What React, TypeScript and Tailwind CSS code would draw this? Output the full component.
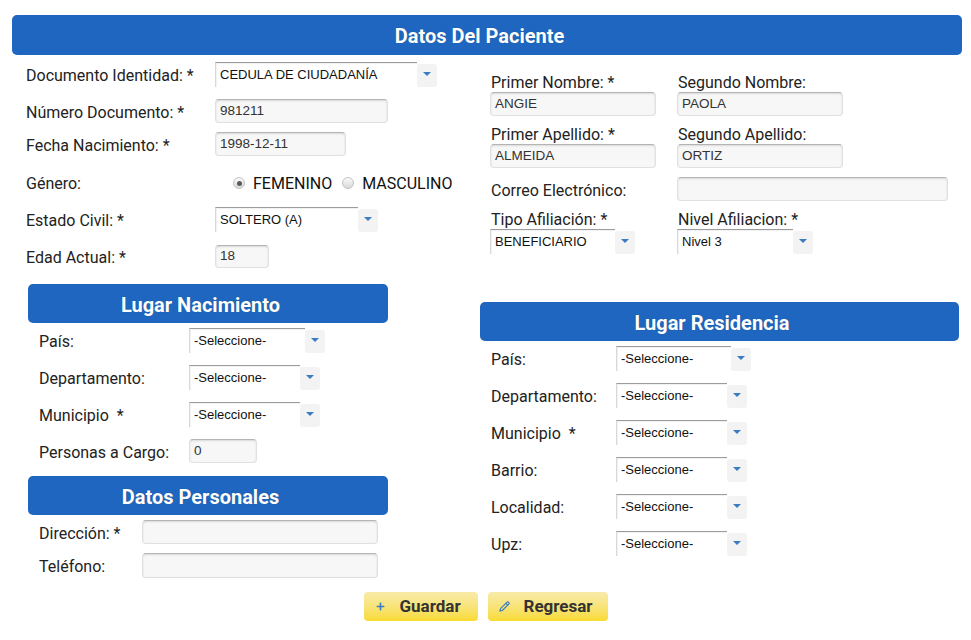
import { Pencil, Plus } from 'lucide-react';

const Header = ({ title, className = '' }: { title: string; className?: string }) => (
  <div
    className={`flex items-center justify-center rounded-[5px] bg-[#1e66bf] pt-[2px] pr-[15px] text-[20px] font-bold text-white [text-shadow:0_0_1px_rgba(0,0,0,0.3)] ${className}`}
  >
    {title}
  </div>
);

const Select = ({ value, width }: { value: string; width: string }) => (
  <div className="flex h-[25px]">
    <div
      className={`${width} h-full border-t border-l border-t-[#9c9c9c] border-l-[#d8d8d8] bg-white pl-[4px] pt-[4px] text-[13px] leading-[15px] text-[#111] shadow-[inset_1px_1px_1px_rgba(0,0,0,0.06)] font-['Liberation_Sans',Arial,sans-serif]`}
    >
      {value}
    </div>
    <div className="mt-[2px] flex h-[23px] w-[20px] items-start justify-center rounded-[3px] bg-[#f4f3f3] pt-[8px]">
      <div className="h-0 w-0 border-x-[4px] border-t-[4px] border-x-transparent border-t-[#3a7cc2]" />
    </div>
  </div>
);

const Input = ({ value = '', width, h = 'h-[24px]' }: { value?: string; width: string; h?: string }) => (
  <div
    className={`${width} ${h} flex items-center rounded-[4px] border border-[#e0e0e0] border-t-[#b4b4b4] bg-[#f7f7f7] pl-[4px] text-[13.5px] text-[#333] shadow-[inset_0_1px_2px_rgba(0,0,0,0.12)] font-['Liberation_Sans',Arial,sans-serif]`}
  >
    {value}
  </div>
);

const Radio = ({ checked }: { checked?: boolean }) => (
  <div className="flex h-[12px] w-[12px] items-center justify-center rounded-full border border-[#c2c2c2] bg-linear-to-b from-[#fbfbfb] to-[#d9d9d9]">
    {checked && <div className="h-[5px] w-[5px] rounded-full bg-[#5a5a5a]" />}
  </div>
);

const Row = ({
  label,
  labelW,
  className = '',
  children,
}: {
  label: string;
  labelW: string;
  className?: string;
  children: React.ReactNode;
}) => (
  <div className={`flex items-center ${className}`}>
    <div className={`${labelW} pt-[2px] leading-[19px]`}>{label}</div>
    {children}
  </div>
);

export default function App() {
  return (
    <div className="w-[971px] bg-white px-[12px] pt-[15px] pb-[19px] text-[16px] text-[#222] font-['Roboto',sans-serif]">
      <Header title="Datos Del Paciente" className="h-[40px] w-[950px]" />

      <div className="grid grid-cols-[468px_482px]">
        {/* left column */}
        <div>
          <div className="pl-[14px]">
            <Row label="Documento Identidad: *" labelW="w-[189px]" className="mt-[7px]">
              <Select value="CEDULA DE CIUDADANÍA" width="w-[202px]" />
            </Row>
            <Row label="Número Documento: *" labelW="w-[189px]" className="mt-[12px]">
              <Input value="981211" width="w-[173px]" />
            </Row>
            <Row label="Fecha Nacimiento: *" labelW="w-[189px]" className="mt-[9px]">
              <Input value="1998-12-11" width="w-[131px]" />
            </Row>
            <Row label="Género:" labelW="w-[189px]" className="mt-[14px] h-[24px]">
              <div className="ml-[18px] flex items-center pt-[2px] text-[16px] leading-[19px] text-[#111]">
                <Radio checked />
                <span className="ml-[8px]">FEMENINO</span>
                <div className="ml-[10px]">
                  <Radio />
                </div>
                <span className="ml-[8px]">MASCULINO</span>
              </div>
            </Row>
            <Row label="Estado Civil: *" labelW="w-[189px]" className="mt-[13px]">
              <Select value="SOLTERO (A)" width="w-[143px]" />
            </Row>
            <Row label="Edad Actual: *" labelW="w-[189px]" className="mt-[13px]">
              <Input value="18" width="w-[54px]" h="h-[23px]" />
            </Row>
          </div>

          <div className="ml-[16px] w-[360px]">
            <Header title="Lugar Nacimiento" className="mt-[16px] h-[39px]" />
            <div className="pl-[11px]">
              <Row label="País:" labelW="w-[150px]" className="mt-[5px]">
                <Select value="-Seleccione-" width="w-[116px]" />
              </Row>
              <Row label="Departamento:" labelW="w-[150px]" className="mt-[12px]">
                <Select value="-Seleccione-" width="w-[111px]" />
              </Row>
              <Row label="Municipio  *" labelW="w-[150px] whitespace-pre" className="mt-[12px]">
                <Select value="-Seleccione-" width="w-[111px]" />
              </Row>
              <Row label="Personas a Cargo:" labelW="w-[150px]" className="mt-[12px]">
                <Input value="0" width="w-[68px]" />
              </Row>
            </div>

            <Header title="Datos Personales" className="mt-[13px] h-[39px]" />
            <div className="pl-[11px]">
              <Row label="Dirección: *" labelW="w-[103px]" className="mt-[5px]">
                <Input width="w-[236px]" />
              </Row>
              <Row label="Teléfono:" labelW="w-[103px]" className="mt-[9px]">
                <Input width="w-[236px]" h="h-[25px]" />
              </Row>
            </div>
          </div>
        </div>

        {/* right column */}
        <div>
          <div className="pl-[10px]">
            <div className="mt-[18px] grid grid-cols-[187px_auto]">
              <div>
                <div className="h-[19px] pl-[1px] leading-[19px]">Primer Nombre: *</div>
                <Input value="ANGIE" width="w-[166px]" />
              </div>
              <div>
                <div className="h-[19px] pl-[1px] leading-[19px]">Segundo Nombre:</div>
                <Input value="PAOLA" width="w-[166px]" />
              </div>
            </div>
            <div className="mt-[9px] grid grid-cols-[187px_auto]">
              <div>
                <div className="h-[19px] pl-[1px] leading-[19px]">Primer Apellido: *</div>
                <Input value="ALMEIDA" width="w-[166px]" />
              </div>
              <div>
                <div className="h-[19px] pl-[1px] leading-[19px]">Segundo Apellido:</div>
                <Input value="ORTIZ" width="w-[166px]" />
              </div>
            </div>
            <Row label="Correo Electrónico:" labelW="w-[187px] pl-[1px]" className="mt-[9px]">
              <Input width="w-[271px]" />
            </Row>
            <div className="mt-[9px] grid grid-cols-[187px_auto]">
              <div>
                <div className="h-[19px] pl-[1px] leading-[19px]">Tipo Afiliación: *</div>
                <Select value="BENEFICIARIO" width="w-[125px]" />
              </div>
              <div>
                <div className="h-[19px] pl-[1px] leading-[19px]">Nivel Afiliacion: *</div>
                <Select value="Nivel 3" width="w-[116px]" />
              </div>
            </div>
          </div>

          <Header title="Lugar Residencia" className="mt-[48px] h-[39px] w-[479px]" />
          <div className="pl-[11px]">
            <Row label="País:" labelW="w-[125px]" className="mt-[5px]">
              <Select value="-Seleccione-" width="w-[115px]" />
            </Row>
            {['Departamento:', 'Municipio  *', 'Barrio:', 'Localidad:', 'Upz:'].map((l) => (
              <Row key={l} label={l} labelW="w-[125px] whitespace-pre" className="mt-[12px]">
                <Select value="-Seleccione-" width="w-[111px]" />
              </Row>
            ))}
          </div>
        </div>
      </div>

      <div className="mt-[14px] flex justify-center gap-[10px]">
        <button className="flex h-[29px] w-[114px] items-center rounded-[4px] bg-linear-to-b from-[#f8eba9] to-[#f9db2c] pl-[11px] text-[17px] font-bold text-[#333]">
          <Plus size={11} strokeWidth={3.5} className="text-[#3a7cc2]" />
          <span className="ml-[14px]">Guardar</span>
        </button>
        <button className="flex h-[29px] w-[120px] items-center rounded-[4px] bg-linear-to-b from-[#f8eba9] to-[#f9db2c] pl-[11px] text-[17px] font-bold text-[#333]">
          <Pencil size={11} strokeWidth={2.5} className="text-[#3a7cc2]" />
          <span className="ml-[14px]">Regresar</span>
        </button>
      </div>
    </div>
  );
}
